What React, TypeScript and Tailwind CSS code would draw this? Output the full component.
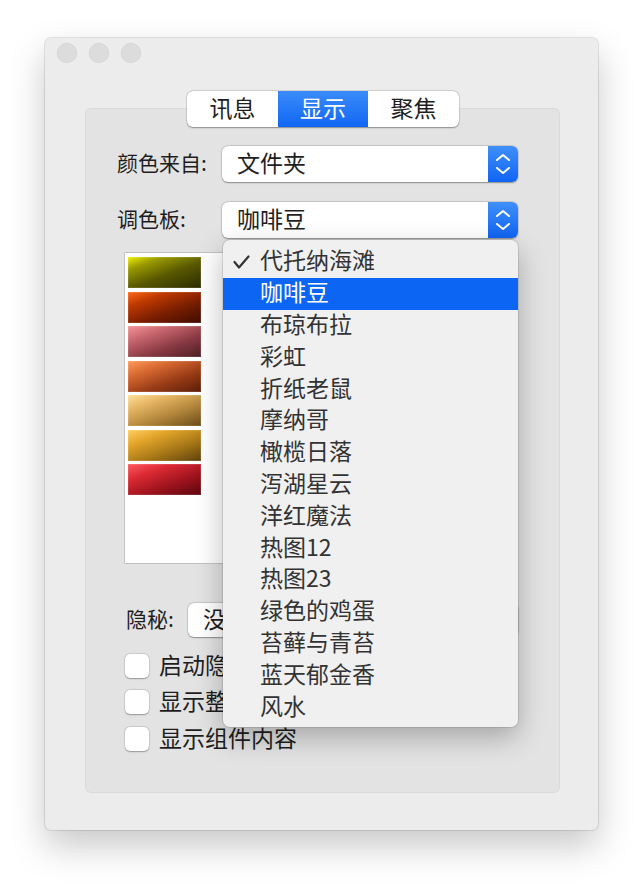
const swatches = [
  "bg-[linear-gradient(160deg,#f2f200_0%,#9a9a00_22%,#585800_55%,#2c2c00_100%)]",
  "bg-[linear-gradient(160deg,#ff6a1a_0%,#c03a00_25%,#7a1e00_60%,#3e0c00_100%)]",
  "bg-[linear-gradient(160deg,#f6949a_0%,#c8666e_28%,#8a3a44_62%,#4e1e24_100%)]",
  "bg-[linear-gradient(160deg,#ff9a5a_0%,#d86a32_28%,#9a3c16_62%,#5a1e08_100%)]",
  "bg-[linear-gradient(160deg,#ffe09a_0%,#e4b462_28%,#b0843a_62%,#6a4c18_100%)]",
  "bg-[linear-gradient(160deg,#ffd060_0%,#e2a42a_28%,#a87818_62%,#5e420c_100%)]",
  "bg-[linear-gradient(160deg,#ff5a60_0%,#dc2a34_28%,#a0141e_62%,#5a060e_100%)]",
];

const palettes = [
  "代托纳海滩",
  "咖啡豆",
  "布琼布拉",
  "彩虹",
  "折纸老鼠",
  "摩纳哥",
  "橄榄日落",
  "泻湖星云",
  "洋红魔法",
  "热图12",
  "热图23",
  "绿色的鸡蛋",
  "苔藓与青苔",
  "蓝天郁金香",
  "风水",
];

function Stepper() {
  return (
    <div className="w-[30px] h-full rounded-r-[6px] bg-[linear-gradient(180deg,#3f8ff9,#1064f3)] flex items-center justify-center">
      <svg width="16" height="22" viewBox="0 0 16 22" fill="none" stroke="white" strokeWidth="2" strokeLinecap="round" strokeLinejoin="round">
        <polyline points="2,7 8,2 14,7" />
        <polyline points="2,15 8,20 14,15" />
      </svg>
    </div>
  );
}

function Select({ text, w, h }: { text: string; w: string; h: string }) {
  return (
    <div className={`${w} ${h} flex bg-white rounded-[6px] shadow-[0_0.5px_1.5px_rgba(0,0,0,0.35),0_0_0_0.5px_rgba(0,0,0,0.12)]`}>
      <div className="flex-1 pl-[15px] pb-[3px] flex items-center text-[23px] leading-none text-[#1e1e1e]">{text}</div>
      <Stepper />
    </div>
  );
}

function Checkbox({ label }: { label: string }) {
  return (
    <div className="flex items-center gap-[10px] h-[24px]">
      <div className="w-[24px] h-[24px] rounded-[5px] bg-white shadow-[0_0.5px_1.5px_rgba(0,0,0,0.3),0_0_0_0.5px_rgba(0,0,0,0.1)]" />
      <span className="pb-[3px] text-[23px] leading-none text-[#1e1e1e]">{label}</span>
    </div>
  );
}

export default function App() {
  return (
    <div className="relative w-[644px] h-[884px] bg-white pt-[38px] pl-[45px] font-['PingFang_SC','Noto_Sans_CJK_SC',sans-serif]">
      {/* Window */}
      <div className="w-[553px] h-[792px] bg-[#ececec] rounded-[6px] shadow-[0_0_0_1px_rgba(0,0,0,0.1),0_16px_36px_rgba(0,0,0,0.22)] flex flex-col">
        {/* Traffic lights */}
        <div className="flex gap-[12px] pt-[5px] pl-[12px]">
          <div className="w-[20px] h-[20px] rounded-full bg-[#dcdcdc] shadow-[inset_0_0_0_0.5px_rgba(0,0,0,0.08)]" />
          <div className="w-[20px] h-[20px] rounded-full bg-[#dcdcdc] shadow-[inset_0_0_0_0.5px_rgba(0,0,0,0.08)]" />
          <div className="w-[20px] h-[20px] rounded-full bg-[#dcdcdc] shadow-[inset_0_0_0_0.5px_rgba(0,0,0,0.08)]" />
        </div>

        {/* Tabs */}
        <div className="relative z-10 flex justify-center pl-[3px] mt-[28px]">
          <div className="flex h-[36px] rounded-[6px] bg-white shadow-[0_0.5px_1.5px_rgba(0,0,0,0.35),0_0_0_0.5px_rgba(0,0,0,0.12)] text-[23px] leading-none">
            <div className="w-[91px] pb-[3px] flex items-center justify-center text-[#1e1e1e]">讯息</div>
            <div className="w-[90px] pb-[3px] flex items-center justify-center text-white bg-[linear-gradient(180deg,#3a8bf9,#1167f4)]">显示</div>
            <div className="w-[91px] pb-[3px] flex items-center justify-center text-[#1e1e1e]">聚焦</div>
          </div>
        </div>

        {/* Group box */}
        <div className="-mt-[19px] ml-[40px] w-[475px] h-[685px] rounded-[6px] bg-[#e3e3e3] shadow-[inset_0_0_0_1px_rgba(0,0,0,0.04)] pt-[38px] pl-[32px] flex flex-col text-[#1e1e1e]">
          <div className="flex items-center">
            <span className="w-[105px] pb-[3px] text-[21px] leading-none">颜色来自:</span>
            <Select text="文件夹" w="w-[296px]" h="h-[36px]" />
          </div>
          <div className="flex items-center mt-[20px]">
            <span className="w-[105px] pb-[3px] text-[21px] leading-none">调色板:</span>
            <Select text="咖啡豆" w="w-[296px]" h="h-[36px]" />
          </div>

          {/* Swatch list */}
          <div className="ml-[8px] mt-[15px] w-[260px] h-[310px] bg-white shadow-[0_0_0_1px_rgba(0,0,0,0.14)] pt-[4px] pl-[3px] flex flex-col gap-[3.5px]">
            {swatches.map((c, i) => (
              <div key={i} className={`w-[73px] h-[31px] ${c} shadow-[inset_0_0_0_1px_rgba(255,255,255,0.12)]`} />
            ))}
          </div>

          <div className="flex items-center mt-[40px] ml-[9px]">
            <span className="w-[62px] pb-[3px] text-[21px] leading-none">隐秘:</span>
            <Select text="没有" w="w-[330px]" h="h-[34px]" />
          </div>

          <div className="flex flex-col gap-[12px] mt-[17px] ml-[8px]">
            <Checkbox label="启动隐秘" />
            <Checkbox label="显示整体" />
            <div className="mt-[1px]">
              <Checkbox label="显示组件内容" />
            </div>
          </div>
        </div>
      </div>

      {/* Popup menu */}
      <div className="absolute left-[223px] top-[240px] w-[295px] h-[487px] rounded-[7px] bg-[#f0f0f0] shadow-[0_0_0_1px_rgba(0,0,0,0.1),0_10px_28px_rgba(0,0,0,0.28)] pt-[6px]">
        {palettes.map((p, i) => (
          <div
            key={p}
            className={`relative h-[31.8px] pb-[4px] flex items-center pl-[37px] text-[23px] leading-none ${i === 1 ? "bg-[#0d65f3] text-white" : "text-[#333333]"}`}
          >
            {i === 0 && (
              <svg className="absolute left-[10px] top-[9px]" width="17" height="14" viewBox="0 0 17 14" fill="none" stroke="#333333" strokeWidth="2.2" strokeLinecap="round" strokeLinejoin="round">
                <polyline points="1.5,7 6,12.5 15.5,1.5" />
              </svg>
            )}
            {p}
          </div>
        ))}
      </div>
    </div>
  );
}
